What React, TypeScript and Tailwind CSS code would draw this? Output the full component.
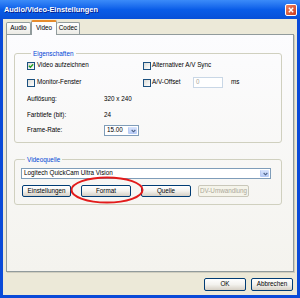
import React from "react";

const Check = ({ checked = false }: { checked?: boolean }) => (
  <span className="w-[8px] h-[8px] border border-[#1C5180] bg-gradient-to-br from-[#DCDCD7] to-white flex items-center justify-center shrink-0">
    {checked && (
      <svg width="6" height="6" viewBox="0 0 7 7">
        <path d="M1 3.2 L2.8 5 L6 1.5" stroke="#21A121" strokeWidth="1.6" fill="none" />
      </svg>
    )}
  </span>
);

const Chevron = () => (
  <svg width="5" height="4" viewBox="0 0 6 4">
    <path d="M0.8 0.8 L3 3 L5.2 0.8" stroke="#4D6185" strokeWidth="1.3" fill="none" />
  </svg>
);

const DropButton = () => (
  <span className="w-[9px] h-full bg-gradient-to-b from-[#D8E4FD] to-[#B4C9F6] border-l border-[#B9CBF3] rounded-[1px] flex items-center justify-center">
    <Chevron />
  </span>
);

const Btn = ({ label, w, disabled = false, cls = "" }: { label: string; w: string; disabled?: boolean; cls?: string }) => (
  <div
    className={`${w} ${cls} h-[12px] rounded-[2px] border flex items-center justify-center text-[6.3px] leading-none ${
      disabled
        ? "border-[#C9C7BA] text-[#ACA899] bg-[#F5F4EA]"
        : "border-[#003C74] text-black bg-gradient-to-b from-white via-[#F3F2EE] to-[#D6D0C5]"
    }`}
  >
    {label}
  </div>
);

export default function App() {
  return (
    <div className="relative w-[300px] h-[298px] flex flex-col bg-[#0A4AD8] font-['Liberation_Sans',Arial,sans-serif] select-none overflow-hidden">
      {/* Title bar */}
      <div className="h-[19px] flex items-center justify-between pl-[4px] pr-[3px] bg-gradient-to-b from-[#3B8BF9] via-[#0A5DE8] to-[#0850D8]">
        <span className="text-white font-bold text-[7.4px] leading-none [text-shadow:1px_1px_0_#0A1E8C]">
          Audio/Video-Einstellungen
        </span>
        <span className="w-[12px] h-[12px] rounded-[2px] border border-white bg-gradient-to-br from-[#EE8262] to-[#C8391A] flex items-center justify-center">
          <svg width="6" height="6" viewBox="0 0 6 6">
            <path d="M0.8 0.8 L5.2 5.2 M5.2 0.8 L0.8 5.2" stroke="white" strokeWidth="1.4" />
          </svg>
        </span>
      </div>

      {/* Body */}
      <div className="flex-1 mx-[3px] mb-[3px] bg-[#ECE9D8] flex flex-col px-[3px] pt-[1px]">
        {/* Tabs */}
        <div className="h-[14px] flex items-end relative z-10">
          <div className="w-[25px] h-[12px] border border-b-0 border-[#919B9C] rounded-t-[2px] bg-gradient-to-b from-white to-[#ECEBE5] flex items-center justify-center text-[6.4px] leading-none">
            Audio
          </div>
          <div className="w-[26px] h-[15px] -mb-[1px] border-x border-[#919B9C] border-t-2 border-t-[#E68B2C] rounded-t-[2px] bg-[#FCFCFE] flex items-center justify-center text-[6.4px] leading-none">
            Video
          </div>
          <div className="w-[23px] h-[12px] border border-b-0 border-l-0 border-[#919B9C] rounded-t-[2px] bg-gradient-to-b from-white to-[#ECEBE5] flex items-center justify-center text-[6.4px] leading-none">
            Codec
          </div>
        </div>

        {/* Tab panel */}
        <div className="flex-1 border border-[#919B9C] bg-gradient-to-b from-[#FCFCFE] to-[#F4F3EE] shadow-[1px_1px_0_#D0CEBF] flex flex-col pl-[7px] text-[6.3px] leading-none text-black">
          {/* Eigenschaften */}
          <fieldset className="mt-[15px] w-[268px] border border-[#D0D0BF] rounded-[3px] pl-[12px] pb-[3px]">
            <legend className="ml-[4px] px-[2px] text-[#0046D5] text-[6.4px] leading-[7px]">Eigenschaften</legend>
            <div className="flex flex-col">
              <div className="h-[17px] flex items-center">
                <div className="w-[116px] flex items-center gap-[2px]">
                  <Check checked />
                  <span>Video aufzeichnen</span>
                </div>
                <div className="flex items-center gap-[1px]">
                  <Check />
                  <span>Alternativer A/V Sync</span>
                </div>
              </div>
              <div className="h-[17px] flex items-center">
                <div className="w-[116px] flex items-center gap-[2px]">
                  <Check />
                  <span>Monitor-Fenster</span>
                </div>
                <div className="flex items-center gap-[1px]">
                  <Check />
                  <span className="w-[40px]">A/V-Offset</span>
                  <div className="w-[30px] h-[11px] border border-[#C9D7E6] bg-white flex items-center pl-[2px] text-[#ACA899]">
                    0
                  </div>
                  <span className="ml-[7px]">ms</span>
                </div>
              </div>
              <div className="h-[17px] flex items-center">
                <span className="w-[77px]">Auflösung:</span>
                <span>320 x 240</span>
              </div>
              <div className="h-[14px] flex items-center">
                <span className="w-[77px]">Farbtiefe (bit):</span>
                <span>24</span>
              </div>
              <div className="h-[17px] flex items-center">
                <span className="w-[77px]">Frame-Rate:</span>
                <div className="w-[35px] h-[11px] border border-[#7F9DB9] bg-white flex items-center justify-between p-[1px]">
                  <span className="pl-[1px]">15.00</span>
                  <DropButton />
                </div>
              </div>
            </div>
          </fieldset>

          {/* Videoquelle */}
          <fieldset className="mt-[13px] w-[268px] border border-[#D0D0BF] rounded-[3px] pl-[6px] pt-[5px] pb-[7px]">
            <legend className="ml-[4px] px-[2px] text-[#0046D5] text-[6.4px] leading-[7px]">Videoquelle</legend>
            <div className="w-[250px] h-[11px] border border-[#7F9DB9] bg-white flex items-center justify-between p-[1px]">
              <span className="pl-[1px]">Logitech QuickCam Ultra Vision</span>
              <DropButton />
            </div>
            <div className="mt-[6px] flex items-center pl-[1px]">
              <Btn label="Einstellungen" w="w-[49px]" />
              <Btn label="Format" w="w-[50px]" cls="ml-[10px]" />
              <Btn label="Quelle" w="w-[50px]" cls="ml-[10px]" />
              <Btn label="DV-Umwandlung" w="w-[51px]" cls="ml-[7px]" disabled />
            </div>
          </fieldset>
        </div>

        {/* Footer */}
        <div className="h-[23px] flex justify-end items-start pt-[6px] pr-[1px] gap-[5px]">
          <Btn label="OK" w="w-[42px]" cls="h-[13px]" />
          <Btn label="Abbrechen" w="w-[42px]" cls="h-[13px]" />
        </div>
      </div>

      {/* Red annotation ellipse */}
      <svg className="absolute left-[70px] top-[176px]" width="74" height="28" viewBox="0 0 74 28">
        <ellipse cx="37" cy="14" rx="35.5" ry="12.5" fill="none" stroke="#E21B1B" strokeWidth="2" />
      </svg>
    </div>
  );
}
